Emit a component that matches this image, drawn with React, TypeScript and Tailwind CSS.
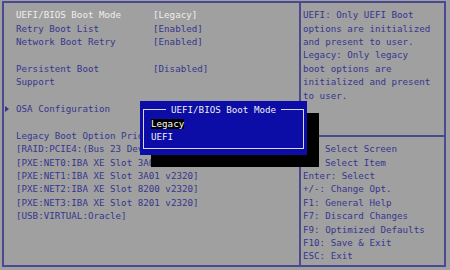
import React from "react";

const mono = { fontFamily: '"DejaVu Sans Mono", "Liberation Mono", monospace' };

function Row({ label, value, white, arrow, clip }: { label?: string; value?: string; white?: boolean; arrow?: boolean; clip?: string }) {
  return (
    <div className={`flex h-[13.4px] leading-[13.4px] whitespace-nowrap ${white ? "text-[#eeeeee]" : "text-[#36368f]"}`}>
      <div className="w-[12px] shrink-0 flex items-center pl-[1px]">
        {arrow && (
          <svg width="4" height="6" viewBox="0 0 4 6">
            <path d="M0 0 L4 3 L0 6 Z" fill="#36368f" />
          </svg>
        )}
      </div>
      {value !== undefined ? (
        <>
          <span className="w-[137px] shrink-0">{label}</span>
          <span>{value}</span>
        </>
      ) : (
        <span className={`overflow-hidden ${clip ?? ""}`}>{label ?? ""}</span>
      )}
    </div>
  );
}

function HRow({ text }: { text?: string }) {
  return <div className="h-[13.4px] leading-[13.4px] whitespace-nowrap text-[#36368f] pl-[2px]">{text ?? ""}</div>;
}

export default function App() {
  return (
    <div className="relative w-[450px] h-[270px] bg-[#a0a0a0] pt-[1px] pl-[2px] overflow-hidden text-[9.2px]" style={mono}>
      <div className="flex w-[444px] h-[266px] border-2 border-[#4a4a92]">
        <div className="w-[297px] shrink-0 border-r-2 border-[#4a4a92] pt-[5.3px] overflow-hidden">
          <Row label="UEFI/BIOS Boot Mode" value="[Legacy]" white />
          <Row label="Retry Boot List" value="[Enabled]" />
          <Row label="Network Boot Retry" value="[Enabled]" />
          <Row />
          <Row label="Persistent Boot" value="[Disabled]" />
          <Row label="Support" />
          <Row />
          <Row label="OSA Configuration" arrow />
          <Row />
          <Row label="Legacy Boot Option Priorities" clip="w-[124px]" />
          <Row label="[RAID:PCIE4:(Bus 23 Dev 00)PCI RAID Adapter]" clip="w-[124px]" />
          <Row label="[PXE:NET0:IBA XE Slot 3A00 v2320]" clip="w-[135px]" />
          <Row label="[PXE:NET1:IBA XE Slot 3A01 v2320]" />
          <Row label="[PXE:NET2:IBA XE Slot 8200 v2320]" />
          <Row label="[PXE:NET3:IBA XE Slot 8201 v2320]" />
          <Row label="[USB:VIRTUAL:Oracle]" />
        </div>
        <div className="flex-1 pt-[5.3px] overflow-hidden">
          <HRow text="UEFI: Only UEFI Boot" />
          <HRow text="options are initialized" />
          <HRow text="and present to user." />
          <HRow text="Legacy: Only legacy" />
          <HRow text="boot options are" />
          <HRow text="initialized and present" />
          <HRow text="to user." />
          <HRow />
          <HRow />
          <div className="h-[13.4px] flex items-center">
            <div className="w-full h-[2px] bg-[#4a4a92]" />
          </div>
          <div className="h-[13.4px] leading-[13.4px] whitespace-nowrap text-[#36368f] pl-[24px]">Select Screen</div>
          <div className="h-[13.4px] leading-[13.4px] whitespace-nowrap text-[#36368f] pl-[24px]">Select Item</div>
          <HRow text="Enter: Select" />
          <HRow text="+/-: Change Opt." />
          <HRow text="F1: General Help" />
          <HRow text="F7: Discard Changes" />
          <HRow text="F9: Optimized Defaults" />
          <HRow text="F10: Save & Exit" />
          <HRow text="ESC: Exit" />
        </div>
      </div>

      {/* popup shadow */}
      <div className="absolute left-[151px] top-[113px] w-[168px] h-[54px] bg-black" />
      {/* popup */}
      <div className="absolute left-[140px] top-[101px] w-[167px] h-[54px] bg-[#0c0ca6] text-[#eeeeee]">
        <div className="absolute left-[2.5px] top-[7.5px] w-[161px] h-[40px] border border-[#d8d8e8]" />
        <div className="absolute left-0 top-[1.5px] w-full flex justify-center">
          <span className="bg-[#0c0ca6] px-[5px] leading-[13.4px] whitespace-nowrap">UEFI/BIOS Boot Mode</span>
        </div>
        <div className="absolute left-[11px] top-[16px] flex flex-col">
          <div className="h-[13.4px] flex items-center">
            <span className="bg-black h-[10px] leading-[10px] text-white">Legacy</span>
          </div>
          <div className="h-[13.4px] flex items-center">
            <span className="leading-[10px]">UEFI</span>
          </div>
        </div>
      </div>
    </div>
  );
}
